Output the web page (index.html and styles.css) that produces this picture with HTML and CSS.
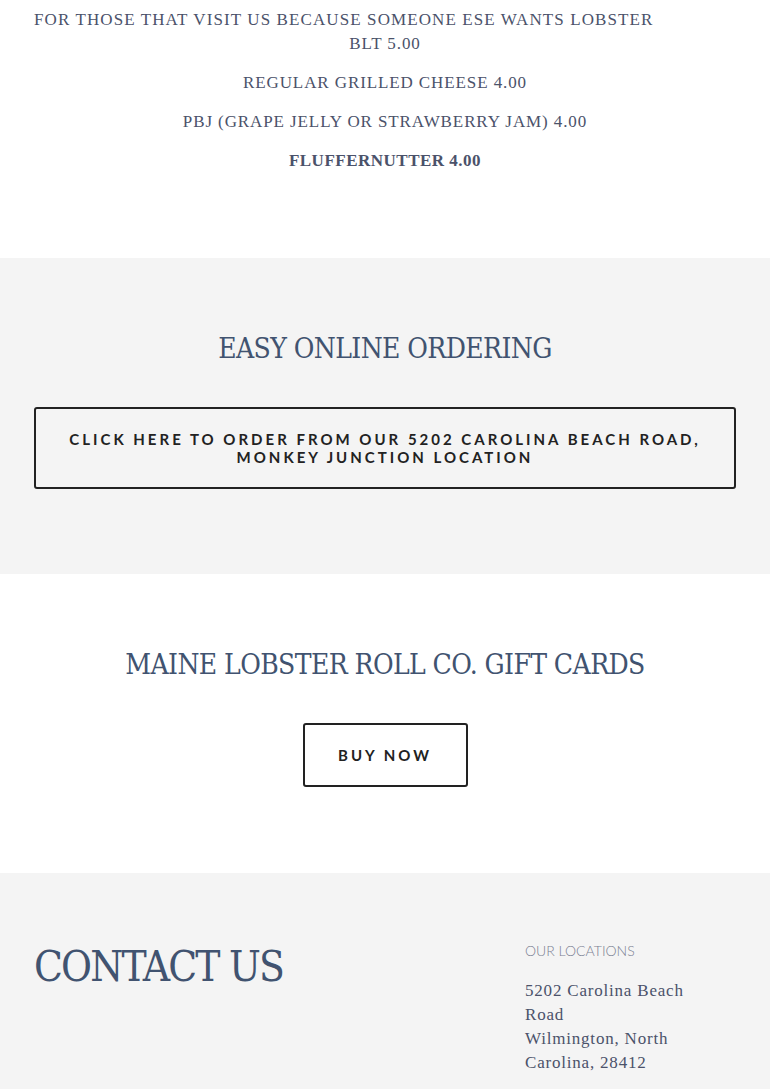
FILE: index.html
```html
<!DOCTYPE html>
<html>
<head>
<meta charset="utf-8">
<link rel="stylesheet" href="styles.css">
</head>
<body>
<section class="menu">
  <p class="item item-left">FOR THOSE THAT VISIT US BECAUSE SOMEONE ESE WANTS LOBSTER</p>
  <p class="item">BLT 5.00</p>
  <p class="item gap">REGULAR GRILLED CHEESE 4.00</p>
  <p class="item gap">PBJ (GRAPE JELLY OR STRAWBERRY JAM) 4.00</p>
  <p class="item gap bold">FLUFFERNUTTER 4.00</p>
</section>
<section class="band gray order">
  <h2 class="title">EASY ONLINE ORDERING</h2>
  <a class="btn btn-wide" href="#">CLICK HERE TO ORDER FROM OUR 5202 CAROLINA BEACH ROAD, MONKEY JUNCTION LOCATION</a>
</section>
<section class="band gift">
  <h2 class="title">MAINE LOBSTER ROLL CO. GIFT CARDS</h2>
  <a class="btn btn-small" href="#">BUY NOW</a>
</section>
<section class="gray contact">
  <h2 class="contact-title">CONTACT US</h2>
  <div class="locations">
    <div class="loc-label">OUR LOCATIONS</div>
    <p class="address">5202 Carolina Beach Road<br>Wilmington, North Carolina, 28412</p>
  </div>
</section>
</body>
</html>
```
FILE: styles.css
```css
html, body {
  margin: 0;
  padding: 0;
  background: #ffffff;
}
body {
  font-family: "Liberation Serif", "DejaVu Serif", serif;
  color: #4b526a;
}
.menu {
  padding: 8px 34px 0;
  height: 250px;
}
.item {
  margin: 0;
  font-size: 17px;
  line-height: 24px;
  text-align: center;
  letter-spacing: 0.9px;
}
.item-left {
  text-align: left;
  letter-spacing: 1.1px;
}
.gap {
  margin-top: 15px;
}
.bold {
  font-weight: bold;
  letter-spacing: 0.5px;
}
.gray {
  background: #f4f4f4;
}
.band {
  display: flex;
  flex-direction: column;
  align-items: center;
  padding: 0 34px;
}
.order {
  height: 316px;
}
.gift {
  height: 299px;
}
.title {
  margin: 71px 0 0;
  font-family: "DejaVu Serif Condensed", "DejaVu Serif", serif;
  font-weight: normal;
  font-size: 28px;
  line-height: 40px;
  letter-spacing: -0.6px;
  color: #415370;
}
.btn {
  display: flex;
  align-items: center;
  justify-content: center;
  box-sizing: border-box;
  border: 2px solid #222222;
  border-radius: 3px;
  font-family: "Lato", "Open Sans", sans-serif;
  font-weight: bold;
  font-size: 15px;
  line-height: 18px;
  letter-spacing: 3px;
  color: #222222;
  text-decoration: none;
  text-align: center;
}
.btn-wide {
  margin-top: 38px;
  align-self: stretch;
  height: 82px;
  padding: 0 30px;
}
.btn-small {
  margin-top: 38px;
  width: 165px;
  height: 64px;
}
.contact {
  display: flex;
  padding: 68px 34px 0;
  height: 216px;
  box-sizing: border-box;
}
.contact-title {
  flex: 1;
  margin: 0;
  font-family: "DejaVu Serif Condensed", "DejaVu Serif", serif;
  font-weight: normal;
  font-size: 42px;
  line-height: 52px;
  letter-spacing: -1.8px;
  color: #415370;
}
.locations {
  width: 211px;
}
.loc-label {
  font-family: "Lato", sans-serif;
  font-weight: 300;
  font-size: 14px;
  line-height: 20px;
  color: #7a8092;
}
.address {
  margin: 18px 0 0;
  max-width: 180px;
  font-size: 17px;
  line-height: 24px;
  letter-spacing: 0.8px;
  color: #4b526a;
}
```
